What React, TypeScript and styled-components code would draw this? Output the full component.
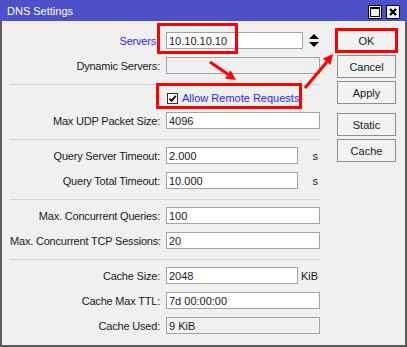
import styled, { createGlobalStyle } from 'styled-components';

type Field = {
  label: string;
  value: string;
  unit?: string;
  disabled?: boolean;
};

const timeouts: Field[] = [
  { label: 'Query Server Timeout:', value: '2.000', unit: 's' },
  { label: 'Query Total Timeout:', value: '10.000', unit: 's' },
];

const limits: Field[] = [
  { label: 'Max. Concurrent Queries:', value: '100' },
  { label: 'Max. Concurrent TCP Sessions:', value: '20' },
];

const cache: Field[] = [
  { label: 'Cache Size:', value: '2048', unit: 'KiB' },
  { label: 'Cache Max TTL:', value: '7d 00:00:00' },
  { label: 'Cache Used:', value: '9 KiB', disabled: true },
];

const buttons = ['OK', 'Cancel', 'Apply', 'Static', 'Cache'];

function FieldRow({ field }: { field: Field }) {
  return (
    <Row>
      <Label>{field.label}</Label>
      <Cell>
        <TextBox
          readOnly
          defaultValue={field.value}
          $disabled={field.disabled}
          $short={!!field.unit}
        />
        {field.unit && <Unit>{field.unit}</Unit>}
      </Cell>
    </Row>
  );
}

// red markup drawn on top of the dialog
function Annotations() {
  return (
    <Overlay width="407" height="347" viewBox="0 0 407 347">
      <rect x="158.5" y="24.5" width="78" height="28" fill="none" stroke="#f00" strokeWidth="3" />
      <rect x="157.5" y="84.5" width="143" height="23" fill="none" stroke="#f00" strokeWidth="3" />
      <rect x="336.5" y="29.5" width="60" height="22" fill="none" stroke="#f00" strokeWidth="3" />
      <line x1="210" y1="62" x2="228" y2="74.3" stroke="#f00" strokeWidth="3" />
      <polygon points="236,80 224.9,78.4 230.6,70.2" fill="#f00" />
      <line x1="305" y1="88" x2="327" y2="61.7" stroke="#f00" strokeWidth="3" />
      <polygon points="333,54 330.5,64.9 322.8,58.5" fill="#f00" />
    </Overlay>
  );
}

export default function App() {
  return (
    <>
      <GlobalStyle />
      <Window>
        <TitleBar>
          <span>DNS Settings</span>
          <TitleButtons>
            <TitleButton>
              <MaxIcon />
            </TitleButton>
            <TitleButton>
              <svg width="8" height="8" viewBox="0 0 8 8">
                <path d="M1 1 L7 7 M7 1 L1 7" stroke="#000" strokeWidth="2.2" />
              </svg>
            </TitleButton>
          </TitleButtons>
        </TitleBar>
        <Body>
          <Form>
            <Section>
              <Row>
                <Label $link>Servers</Label>
                <Cell>
                  <TextBox readOnly defaultValue="10.10.10.10" $servers />
                  <Spin width="10" height="13" viewBox="0 0 10 13">
                    <polygon points="5,0 10,5 0,5" fill="#000" />
                    <polygon points="0,8 10,8 5,13" fill="#000" />
                  </Spin>
                </Cell>
              </Row>
              <Row>
                <Label>Dynamic Servers:</Label>
                <Cell>
                  <TextBox readOnly defaultValue="" $disabled />
                </Cell>
              </Row>
            </Section>
            <Separator />
            <Section>
              <CheckRow>
                <span />
                <Cell>
                  <CheckBox>
                    <svg width="9" height="9" viewBox="0 0 9 9">
                      <path d="M1.5 4.5 L3.5 6.8 L7.8 1.8" fill="none" stroke="#000" strokeWidth="1.8" />
                    </svg>
                  </CheckBox>
                  <CheckLabel>Allow Remote Requests</CheckLabel>
                </Cell>
              </CheckRow>
              <FieldRow field={{ label: 'Max UDP Packet Size:', value: '4096' }} />
            </Section>
            <Separator />
            <Section>
              {timeouts.map((f) => (
                <FieldRow key={f.label} field={f} />
              ))}
            </Section>
            <Separator />
            <Section>
              {limits.map((f) => (
                <FieldRow key={f.label} field={f} />
              ))}
            </Section>
            <Separator />
            <Section>
              {cache.map((f) => (
                <FieldRow key={f.label} field={f} />
              ))}
            </Section>
          </Form>
          <ButtonColumn>
            {buttons.map((b) => (
              <Button key={b} $gapBefore={b === 'Static'}>
                {b}
              </Button>
            ))}
          </ButtonColumn>
        </Body>
        <Annotations />
      </Window>
    </>
  );
}

const GlobalStyle = createGlobalStyle`
  body {
    margin: 0;
    font-family: 'Liberation Sans', Arial, sans-serif;
    font-size: 11px;
    color: #1b1b1b;
    background: #fff;
  }
`;

const Window = styled.div`
  position: relative;
  width: 407px;
  height: 347px;
  display: flex;
  flex-direction: column;
  overflow: hidden;
`;

const TitleBar = styled.div`
  height: 21px;
  flex: none;
  background: #4d50c9;
  color: #fff;
  font-size: 11px;
  display: flex;
  align-items: center;
  justify-content: space-between;
  padding: 0 7px 0 7px;
  box-sizing: border-box;
`;

const TitleButtons = styled.div`
  display: flex;
  gap: 4px;
  margin-top: 3px;
`;

const TitleButton = styled.div`
  width: 14px;
  height: 14px;
  box-sizing: border-box;
  border: 1px solid #000;
  background: #f0f0f0;
  display: flex;
  align-items: center;
  justify-content: center;
`;

const MaxIcon = styled.div`
  width: 10px;
  height: 10px;
  box-sizing: border-box;
  border: 1px solid #000;
  border-top-width: 2px;
`;

const Body = styled.div`
  flex: 1;
  display: flex;
  align-items: flex-start;
  background: #f0f0f0;
  border: 2px solid #5b5b5b;
  border-top: none;
  padding: 11px 0 0 8px;
`;

const Form = styled.div`
  width: 310px;
  display: flex;
  flex-direction: column;
`;

const Section = styled.div`
  display: flex;
  flex-direction: column;
  gap: 8px;
`;

const Separator = styled.div`
  height: 1px;
  background: #d6d6d6;
  margin: 10px 0 7px;
`;

const Row = styled.div`
  display: grid;
  grid-template-columns: 150px 1fr;
  column-gap: 6px;
  align-items: center;
  height: 17px;
`;

const CheckRow = styled(Row)`
  height: 16px;
  margin: -2px 0 -2px;
`;

const Label = styled.span<{ $link?: boolean }>`
  text-align: right;
  white-space: nowrap;
  letter-spacing: -0.2px;
  color: ${({ $link }) => ($link ? '#2a2af0' : '#1b1b1b')};
  padding-right: ${({ $link }) => ($link ? '4px' : '0')};
`;

const Cell = styled.div`
  display: flex;
  align-items: center;
  height: 100%;
`;

const TextBox = styled.input<{ $disabled?: boolean; $short?: boolean; $servers?: boolean }>`
  box-sizing: border-box;
  height: 17px;
  width: ${({ $short, $servers }) => ($servers ? '137px' : $short ? '132px' : '154px')};
  margin: 0;
  padding: 0 2px;
  border: 1px solid #a3a3a3;
  border-radius: 0;
  outline: none;
  font-family: 'Liberation Sans', Arial, sans-serif;
  font-size: 11px;
  color: #1b1b1b;
  background: ${({ $disabled }) => ($disabled ? '#f0f0f0' : '#fff')};
`;

const Spin = styled.svg`
  margin-left: 6px;
  flex: none;
`;

const Unit = styled.span`
  flex: 1;
  text-align: right;
  padding-right: 2px;
`;

const CheckBox = styled.div`
  width: 11px;
  height: 11px;
  box-sizing: border-box;
  margin-left: 1px;
  border: 1px solid #333;
  background: #fff;
  display: flex;
  align-items: center;
  justify-content: center;
`;

const CheckLabel = styled.span`
  margin-left: 4px;
  color: #2a2af0;
  white-space: nowrap;
`;

const ButtonColumn = styled.div`
  width: 59px;
  margin-left: 17px;
  margin-top: -3px;
  display: flex;
  flex-direction: column;
  gap: 3px;
`;

const Button = styled.div<{ $gapBefore?: boolean }>`
  height: 23px;
  box-sizing: border-box;
  border: 1px solid #8e8e8e;
  background: #f2f2f2;
  display: flex;
  align-items: center;
  justify-content: center;
  font-size: 11px;
  color: #1b1b1b;
  margin-top: ${({ $gapBefore }) => ($gapBefore ? '6px' : '0')};
`;

const Overlay = styled.svg`
  position: absolute;
  left: 0;
  top: 0;
  pointer-events: none;
`;
